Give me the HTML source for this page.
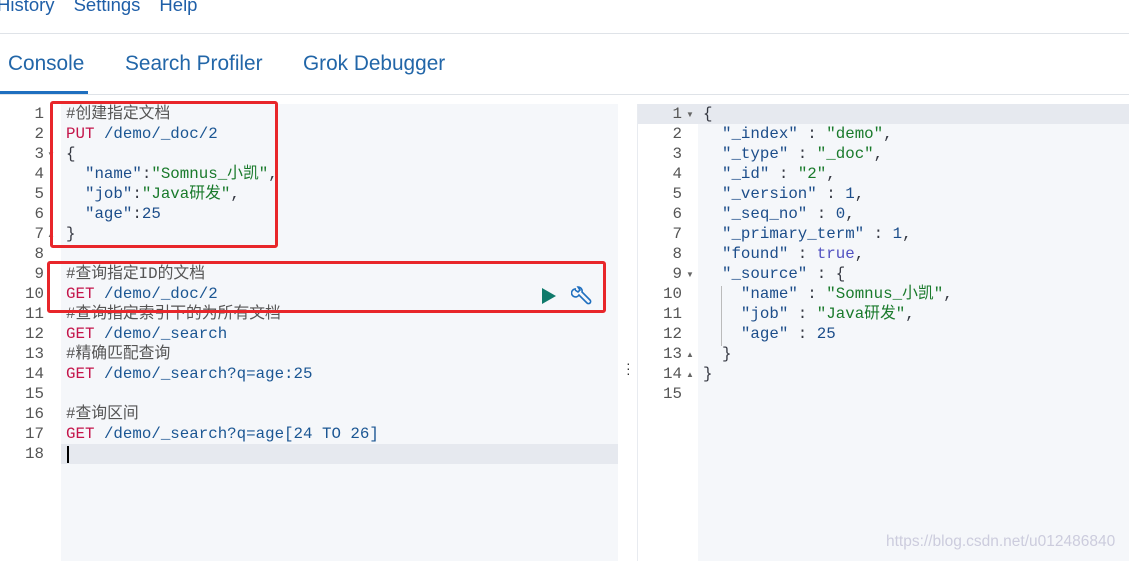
<!DOCTYPE html><html><head><style>
body{margin:0;width:1129px;height:561px;overflow:hidden;background:#fff;font-family:"Liberation Sans",sans-serif;position:relative}
.menu{position:absolute;top:-6px;left:-3px;font-size:18.5px;color:#1f5fa8}
.menu span{margin-right:19px}
.hr{position:absolute;left:0;right:0;height:1px;background:#dfe3e8}
.tab{position:absolute;top:52px;font-size:20.8px;color:#2266a8}
.code{position:absolute;font-family:"Liberation Mono","Noto Sans CJK SC",monospace;font-size:15.8px;line-height:20px;white-space:pre;color:#343741}
.ln{position:absolute;font-family:"Liberation Mono",monospace;font-size:15.8px;line-height:20px;color:#555;text-align:right;width:40px;white-space:pre}
.m{color:#c4154a}.p{color:#1b5693}.k{color:#1c4d8a}.s{color:#197a2b}.n{color:#1c4d8a}.c{color:#555}.b{color:#5050c0}
.box{position:absolute;border:3px solid #e8262a;border-radius:3px}
</style></head><body>
<div class="menu"><span>History</span><span>Settings</span><span>Help</span></div>
<div class="hr" style="top:33px"></div>
<div class="tab" style="left:8px">Console</div>
<div class="tab" style="left:125px">Search Profiler</div>
<div class="tab" style="left:303px">Grok Debugger</div>
<div style="position:absolute;left:0;top:91px;width:88px;height:3px;background:#1f6fbf"></div>
<div class="hr" style="top:94px"></div>
<div style="position:absolute;left:61px;top:104px;width:557px;height:457px;background:#f5f7fa"></div>
<div style="position:absolute;left:61px;top:444px;width:557px;height:20px;background:#e6e9ef"></div>
<div style="position:absolute;left:67px;top:446px;width:2px;height:17px;background:#000"></div>
<div style="position:absolute;left:698px;top:104px;width:431px;height:457px;background:#f5f7fa"></div>
<div style="position:absolute;left:637px;top:104px;width:492px;height:20px;background:#e6e9ef"></div>
<div style="position:absolute;left:637px;top:104px;width:1px;height:457px;background:#e8ebf0"></div>
<div class="ln" style="left:4px;top:104px">1
2
3
4
5
6
7
8
9
10
11
12
13
14
15
16
17
18</div>
<div style="position:absolute;left:47px;top:150px;font-size:8px;color:#666">▼</div>
<div style="position:absolute;left:47px;top:230px;font-size:8px;color:#666">▲</div>
<div class="code" style="left:66px;top:104px"><span class="c">#创建指定文档</span>
<span class="m">PUT</span> <span class="p">/demo/_doc/2</span>
{
  <span class="k">"name"</span>:<span class="s">"Somnus_小凯"</span>,
  <span class="k">"job"</span>:<span class="s">"Java研发"</span>,
  <span class="k">"age"</span>:<span class="n">25</span>
}

<span class="c">#查询指定ID的文档</span>
<span class="m">GET</span> <span class="p">/demo/_doc/2</span>
<span class="c">#查询指定索引下的为所有文档</span>
<span class="m">GET</span> <span class="p">/demo/_search</span>
<span class="c">#精确匹配查询</span>
<span class="m">GET</span> <span class="p">/demo/_search?q=age:25</span>

<span class="c">#查询区间</span>
<span class="m">GET</span> <span class="p">/demo/_search?q=age[24 TO 26]</span>
</div>
<div class="box" style="left:50px;top:101px;width:222px;height:141px"></div>
<div class="box" style="left:47px;top:261px;width:553px;height:46px"></div>
<svg style="position:absolute;left:540px;top:287px" width="18" height="18"><path d="M2 1 L16 9 L2 17Z" fill="#0f7a6b"/></svg>
<svg style="position:absolute;left:571px;top:286px" width="22" height="22" fill="none" stroke="#1f6fbf" stroke-width="1.6"><path d="M5 3 a4 4 0 1 0 3 6 l8 8 a2 2 0 0 0 3-3 l-8-8 a4 4 0 0 0-4-5 l2 3-2 2-3-2"/></svg>
<div style="position:absolute;left:626px;top:361px;font-size:14px;color:#333;line-height:5px">·<br>·<br>·</div>
<div class="ln" style="left:642px;top:104px">1
2
3
4
5
6
7
8
9
10
11
12
13
14
15</div>
<div style="position:absolute;left:686px;top:110px;font-size:8px;color:#666">▼</div>
<div style="position:absolute;left:686px;top:270px;font-size:8px;color:#666">▼</div>
<div style="position:absolute;left:686px;top:350px;font-size:8px;color:#666">▲</div>
<div style="position:absolute;left:686px;top:370px;font-size:8px;color:#666">▲</div>
<div style="position:absolute;left:721px;top:286px;width:1px;height:60px;background:#bbb"></div>
<div class="code" style="left:703px;top:104px">{
  <span class="k">"_index"</span> : <span class="s">"demo"</span>,
  <span class="k">"_type"</span> : <span class="s">"_doc"</span>,
  <span class="k">"_id"</span> : <span class="s">"2"</span>,
  <span class="k">"_version"</span> : <span class="n">1</span>,
  <span class="k">"_seq_no"</span> : <span class="n">0</span>,
  <span class="k">"_primary_term"</span> : <span class="n">1</span>,
  <span class="k">"found"</span> : <span class="b">true</span>,
  <span class="k">"_source"</span> : {
    <span class="k">"name"</span> : <span class="s">"Somnus_小凯"</span>,
    <span class="k">"job"</span> : <span class="s">"Java研发"</span>,
    <span class="k">"age"</span> : <span class="n">25</span>
  }
}
</div>
<div style="position:absolute;left:886px;top:533px;font-size:15.5px;color:#ccd">https://blog.csdn.net/u012486840</div>
</body></html>
